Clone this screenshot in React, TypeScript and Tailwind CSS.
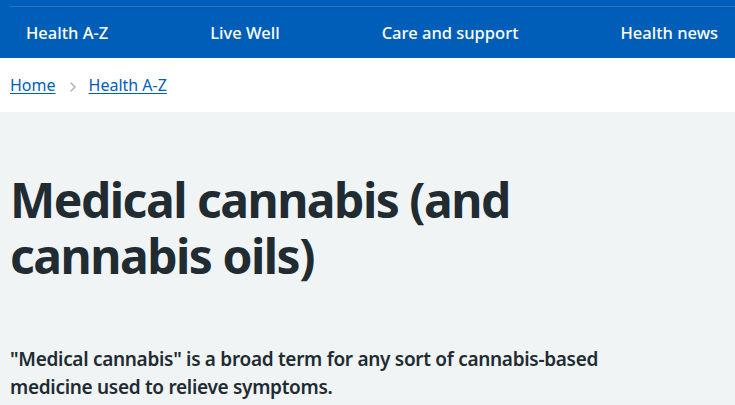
export default function App() {
  const navItems = ["Health A-Z", "Live Well", "Care and support", "Health news"];

  return (
    <div className="min-h-screen bg-[#f0f4f5] text-[#212b32]" style={{ fontFamily: '"Noto Sans", Arial, sans-serif' }}>
      {/* Nav */}
      <nav className="bg-[#005eb8] text-white h-[58px] pt-[6px]">
        <div className="ml-[10px] border-t border-[#2a74c2]">
          <ul className="flex justify-between pl-[16px] pr-[17px] pt-[14px] text-[16.5px] font-medium">
            {navItems.map((item) => (
              <li key={item}>
                <a href="#" className="no-underline">{item}</a>
              </li>
            ))}
          </ul>
        </div>
      </nav>

      {/* Breadcrumbs */}
      <div className="bg-white h-[54px] flex items-center px-[10px] text-[16px]">
        <a href="#" className="text-[#005eb8] underline underline-offset-2">Home</a>
        <svg className="ml-[13px] mr-[12px] mt-[3px]" width="8" height="12" viewBox="0 0 8 12" fill="none">
          <path d="M2 2l4 4-4 4" stroke="#aeb7bd" strokeWidth="1.6" strokeLinecap="round" strokeLinejoin="round" />
        </svg>
        <a href="#" className="text-[#005eb8] underline underline-offset-2">Health A-Z</a>
      </div>

      {/* Content */}
      <main className="px-[10px] pt-[60px]">
        <h1 className="text-[48px] leading-[56px] font-bold max-w-[540px] tracking-[-1.5px]">
          Medical cannabis (and cannabis oils)
        </h1>
        <p className="mt-[61px] text-[19px] leading-[28px] font-semibold max-w-[620px] tracking-[-0.3px]">
          "Medical cannabis" is a broad term for any sort of cannabis-based medicine used to relieve symptoms.
        </p>
      </main>
    </div>
  );
}
